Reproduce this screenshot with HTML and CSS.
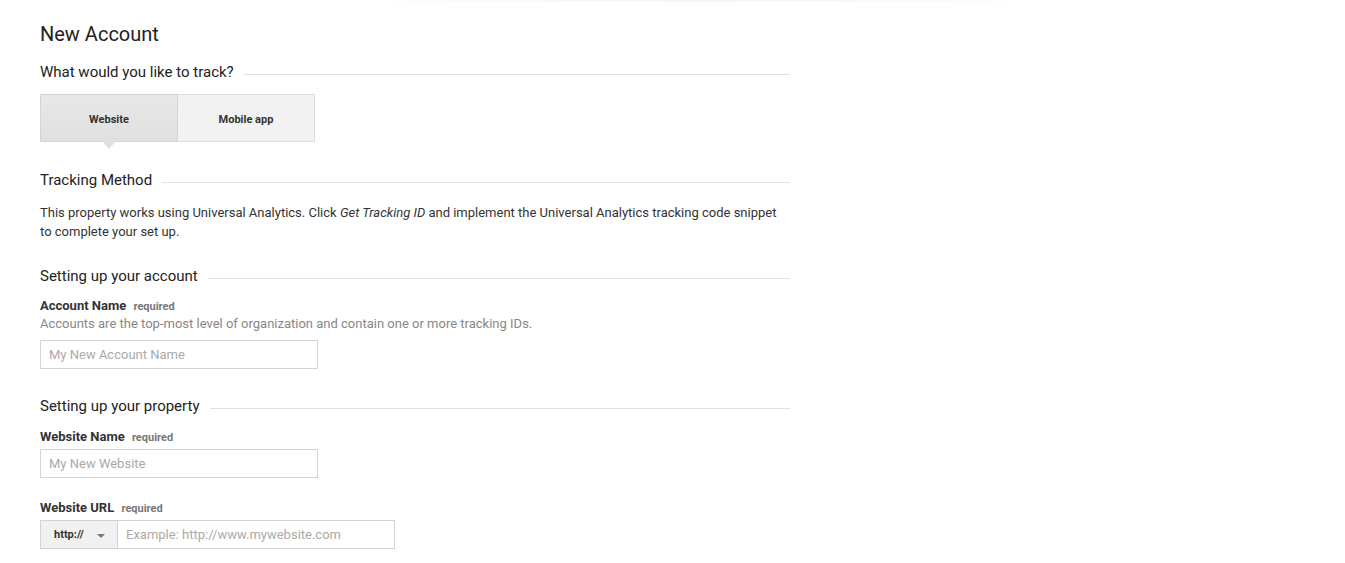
FILE: index.html
```html
<!DOCTYPE html>
<html>
<head>
<meta charset="utf-8">
<link rel="stylesheet" href="styles.css">
</head>
<body>
<div class="topshade"></div>
<main class="page">
  <h1 class="title">New Account</h1>

  <div class="section-head"><span>What would you like to track?</span></div>
  <div class="toggle">
    <button class="tog active">Website</button>
    <button class="tog">Mobile app</button>
  </div>

  <div class="section-head sh-track"><span>Tracking Method</span></div>
  <p class="desc">This property works using Universal Analytics. Click <em>Get Tracking ID</em> and implement the Universal Analytics tracking code snippet to complete your set up.</p>

  <div class="section-head sh-account"><span>Setting up your account</span></div>
  <div class="field">
    <label class="lbl">Account Name <span class="req">required</span></label>
    <div class="help">Accounts are the top-most level of organization and contain one or more tracking IDs.</div>
    <input class="inp" type="text" placeholder="My New Account Name">
  </div>

  <div class="section-head sh-prop"><span>Setting up your property</span></div>
  <div class="field">
    <label class="lbl">Website Name <span class="req">required</span></label>
    <input class="inp" type="text" placeholder="My New Website">
  </div>
  <div class="field f-url">
    <label class="lbl">Website URL <span class="req">required</span></label>
    <div class="urlgroup">
      <div class="proto">http:// <span class="caret"></span></div>
      <input class="inp url" type="text" placeholder="Example: http://www.mywebsite.com">
    </div>
  </div>
</main>
</body>
</html>
```
FILE: styles.css
```css
* { box-sizing: border-box; }
html, body { margin: 0; padding: 0; background: #fff; }
body { font-family: Roboto, "Noto Sans", Arial, sans-serif; color: #222; position: relative; }
.topshade {
  position: absolute; top: 0; left: 300px; width: 800px; height: 3px;
  background: radial-gradient(ellipse at center top, rgba(0,0,0,0.05), rgba(0,0,0,0) 70%);
}
.page { width: 750px; margin-left: 40px; padding-top: 22px; }
.title { font-size: 20px; font-weight: 400; margin: 0; line-height: 24px; color: #222; }
.section-head {
  display: flex; align-items: center; margin-top: 14px; height: 24px;
  font-size: 15px; color: #222;
}
.section-head::after {
  content: ""; flex: 1; height: 1px; background: #e0e0e0; margin-left: 10px; margin-top: 4px;
}
.toggle { display: flex; margin-top: 10px; }
.tog {
  width: 137px; height: 48px; border: 1px solid #dcdcdc; background: #f2f2f2;
  font-family: Roboto, Arial, sans-serif; font-size: 11px; font-weight: 700; color: #333;
  padding: 2px 0 0; margin: 0; position: relative;
}
.tog + .tog { border-left: none; width: 137px; }
.tog.active { width: 138px; background: linear-gradient(#e8e8e8, #e0e0e0); border-color: #d4d4d4; }
.tog.active::after {
  content: ""; position: absolute; left: 50%; bottom: -8px; margin-left: -7px;
  border-left: 7px solid transparent; border-right: 7px solid transparent; border-top: 8px solid #e0e0e0;
}
.sh-track { margin-top: 26px; }
.desc { font-size: 13px; line-height: 19px; color: #333; margin: 11px 0 0; }
.sh-account { margin-top: 23px; }
.field { margin-top: 9px; }
.lbl { display: block; font-size: 13px; font-weight: 700; color: #333; line-height: 17px; }
.req { font-size: 11px; color: #777; margin-left: 4px; }
.help { font-size: 13px; color: #888; line-height: 17px; }
.inp {
  display: block; width: 278px; height: 29px; border: 1px solid #d4d4d4; margin-top: 8px;
  padding: 0 8px; font-family: Roboto, Arial, sans-serif; font-size: 13px; color: #333; outline: none;
}
.help + .inp { margin-top: 8px; }
.lbl + .inp { margin-top: 3px; }
.inp::placeholder { color: #aaa; }
.sh-prop { margin-top: 25px; }
.sh-prop + .field { margin-top: 10px; }
.f-url { margin-top: 21px; }
.urlgroup { display: flex; margin-top: 3px; }
.proto {
  width: 78px; height: 29px; background: #f1f1f1; border: 1px solid #d4d4d4;
  font-size: 11px; font-weight: 700; color: #333; display: flex; align-items: center; padding-left: 13px;
}
.caret {
  display: inline-block; margin-left: 13px; margin-top: 2px;
  border-left: 4px solid transparent; border-right: 4px solid transparent; border-top: 4px solid #777;
}
.inp.url { margin-top: 0; border-left: none; width: 277px; }
```
